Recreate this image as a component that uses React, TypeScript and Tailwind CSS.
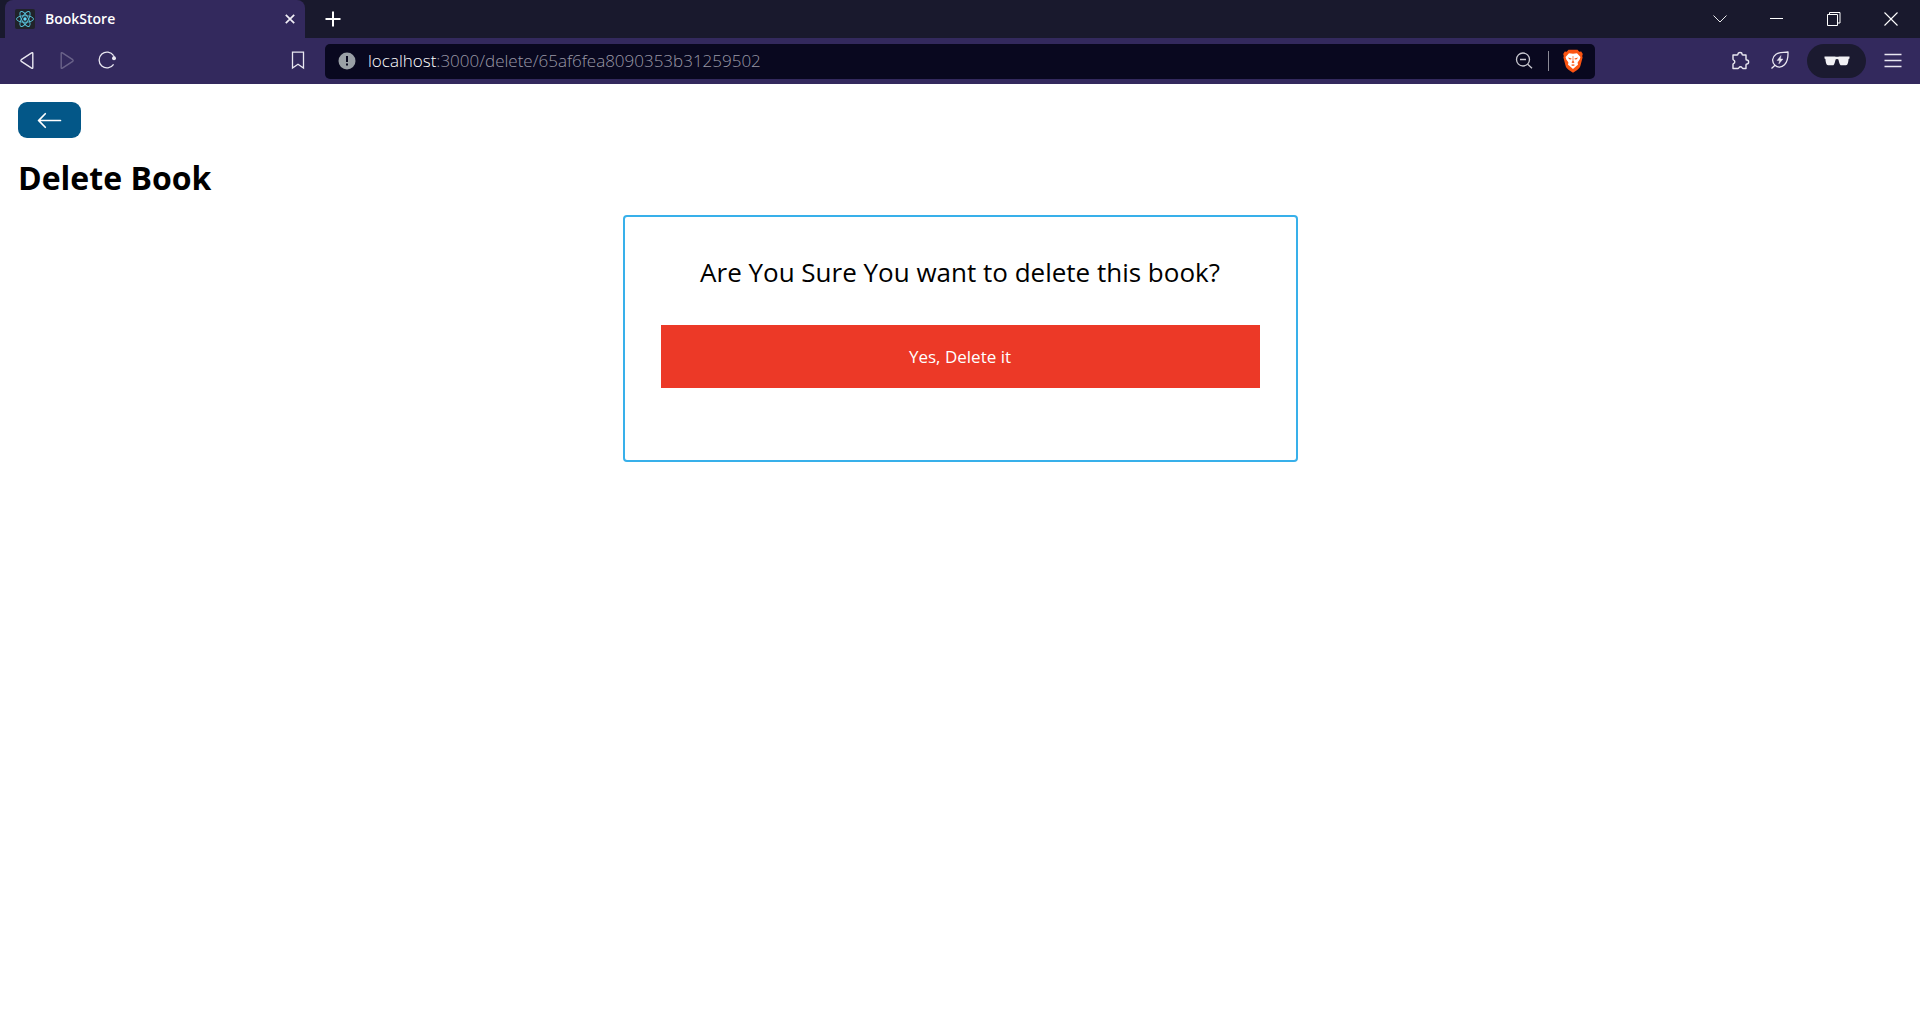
import { useState } from "react";
import { BsArrowLeft } from "react-icons/bs";

function ReactLogo() {
  return (
    <svg viewBox="0 0 20 20" className="size-5" aria-hidden="true">
      <rect width="20" height="20" rx="2" fill="#20232a" />
      <g fill="none" stroke="#58c4dc" strokeWidth="0.9">
        <ellipse cx="10" cy="10" rx="8.5" ry="3.3" />
        <ellipse cx="10" cy="10" rx="8.5" ry="3.3" transform="rotate(60 10 10)" />
        <ellipse cx="10" cy="10" rx="8.5" ry="3.3" transform="rotate(120 10 10)" />
      </g>
      <circle cx="10" cy="10" r="1.7" fill="#61dafb" />
    </svg>
  );
}

function BraveLogo() {
  return (
    <svg viewBox="0 0 20 24" className="h-6 w-5" aria-hidden="true">
      <path d="M5.500 0.800h9L16.300 2.800l1.900-.2 1.600 2.500-.6 2 .4 1.300-2.100 8.200c-.5 2-1.700 3.300-3.300 4.400L10 23.700l-4.200-2.700c-1.600-1.100-2.800-2.400-3.300-4.400L.4 8.400.8 7.100l-.6-2 1.600-2.500 1.900.2z" fill="#fb5412" />
      <path d="M6 4.200l4 .6 4-.6 3.400 3.700-.6 2.300-2.200 3.400.4 2.200-1.600 1.300L10 20l-3.400-2.900-1.600-1.300.4-2.200-2.200-3.400-.6-2.300z" fill="#fff" />
      <path d="M5 8.600l3.600.9-.5 1-1.900-.3zM15 8.600l-3.600.9.5 1 1.900-.3zM9.700 7h.6l.1 5 1.100 1.200L10 14.200l-1.500-1 1.100-1.200zM7.900 16L10 15.300l2.100.7L10 17z" fill="#fb5412" />
    </svg>
  );
}

function TabStrip() {
  return (
    <div className="flex h-[38px] bg-[#19192d] pl-[5px] text-white">
      <div className="flex w-[300px] items-center rounded-t-lg bg-[#33295d] pr-[7px] pl-[10px]">
        <ReactLogo />
        <span className="ml-[10px] flex-1 text-[14px] leading-5 font-semibold">BookStore</span>
        <button aria-label="Close tab" className="grid size-4 place-items-center">
          <svg viewBox="0 0 10 10" className="size-[10px]" stroke="#f0eef6" strokeWidth="1.7">
            <path d="M0.8 0.8l8.4 8.4M9.2 0.8L0.8 9.2" />
          </svg>
        </button>
      </div>
      <button aria-label="New tab" className="ml-5 grid w-4 place-items-center">
        <svg viewBox="0 0 16 16" className="size-4" stroke="white" strokeWidth="2">
          <path d="M8 0.5v15M0.5 8h15" />
        </svg>
      </button>
      <div className="ml-auto flex pr-px">
        <button aria-label="Search tabs" className="grid w-[57px] place-items-center">
          <svg viewBox="0 0 14 14" className="size-[14px]" fill="none" stroke="#e8e8ec">
            <path d="M0.5 3.500L7 10 13.5 3.500" />
          </svg>
        </button>
        <button aria-label="Minimize" className="grid w-[57px] place-items-center">
          <svg viewBox="0 0 14 14" className="size-[14px]" stroke="white">
            <path d="M0 6.5h13" />
          </svg>
        </button>
        <button aria-label="Restore" className="grid w-[57px] place-items-center">
          <svg viewBox="0 0 14 14" className="size-[14px]" fill="none" stroke="white">
            <path d="M0.5 2.5h10v11h-10zM2.5 2.5v-2h10.500v10.500h-2.500" />
          </svg>
        </button>
        <button aria-label="Close window" className="grid w-[57px] place-items-center">
          <svg viewBox="0 0 14 14" className="size-[14px]" stroke="white" strokeWidth="1.1">
            <path d="M0.5 0.5l13 13M13.5 0.5l-13 13" />
          </svg>
        </button>
      </div>
    </div>
  );
}

function Toolbar() {
  const [url, setUrl] = useState("localhost:3000/delete/65af6fea8090353b31259502");
  const colon = url.indexOf(":");
  const host = colon < 0 ? url : url.slice(0, colon);
  return (
    <div className="flex h-[46px] items-center bg-[#33295d] text-[#e9e7f1]">
      <button aria-label="Back" className="ml-[17px] size-5">
        <svg viewBox="0 0 20 20" className="size-5" fill="none" stroke="currentColor" strokeWidth="1.4" strokeLinejoin="round">
          <path d="M15.800 3v13.500q0 1.300-1.200 0.600L4.300 10.300q-0.900-0.800 0-1.600L14.600 1.900q1.200-0.700 1.200 0.600z" />
        </svg>
      </button>
      <button aria-label="Forward" disabled className="ml-5 size-5 text-[#6a6289]">
        <svg viewBox="0 0 20 20" className="size-5" fill="none" stroke="currentColor" strokeWidth="1.4" strokeLinejoin="round">
          <path d="M4.200 3v13.500q0 1.300 1.200 0.600L15.700 10.300q0.900-0.800 0-1.600L5.400 1.900q-1.200-0.700-1.200 0.600z" />
        </svg>
      </button>
      <button aria-label="Reload" className="ml-5 size-5">
        <svg viewBox="0 0 20 20" className="size-5" fill="none" stroke="currentColor" strokeWidth="1.300">
          <path d="M16.600 4.700A7.900 7.900 0 1 0 16.600 13.400" />
          <circle cx="17" cy="7.300" r="2" fill="currentColor" stroke="none" />
          <path d="M16.600 4.700l0.500 2" />
        </svg>
      </button>
      <button aria-label="Bookmark" className="ml-[171px] size-5">
        <svg viewBox="0 0 20 20" className="size-5" fill="none" stroke="currentColor" strokeWidth="1.300">
          <path d="M4.500 1.200h11v15.800L10 13.300 4.500 17z" />
        </svg>
      </button>
      <div className="ml-[17px] flex h-[35px] w-[1270px] shrink items-center rounded-[5px] bg-[#09081f] pr-3 pl-[13px]">
        <svg viewBox="0 0 18 18" className="size-[18px]" aria-hidden="true">
          <circle cx="9" cy="9" r="8.500" fill="#9aa0a6" />
          <path d="M8 4h2v6H8zM8 11.500h2v2H8z" fill="#09081f" />
        </svg>
        <div className="relative ml-3 flex-1 text-[17px] leading-6 font-light">
          <div aria-hidden="true" className="pointer-events-none whitespace-pre text-[#9a98a6]">
            <span className="text-white">{host}</span>
            {url.slice(host.length)}
          </div>
          <input
            aria-label="Address"
            value={url}
            onChange={(e) => setUrl(e.target.value)}
            className="absolute inset-0 w-full bg-transparent text-transparent caret-white outline-none"
          />
        </div>
        <button aria-label="Zoom out" className="size-5 text-[#c9c8d0]">
          <svg viewBox="0 0 20 20" className="size-5" fill="none" stroke="currentColor" strokeWidth="1.300">
            <circle cx="9" cy="8.500" r="6.500" />
            <path d="M13.700 13.200l4.300 4M6 8.500h6" />
          </svg>
        </button>
        <div className="ml-[14px] h-5 w-px bg-[#8b8a96]" />
        <button aria-label="Brave Shields" className="ml-[14px]">
          <BraveLogo />
        </button>
      </div>
      <div className="ml-auto flex items-center">
        <button aria-label="Extensions" className="size-5">
          <svg viewBox="0 0 20 20" className="size-5" fill="none" stroke="currentColor" strokeWidth="1.400" strokeLinejoin="round">
            <path d="M3 4h4.200c.7 0 .8-.4.800-.9C8 2 9 1.500 10 1.500s2 .6 2 1.600c0 .5.200.9.900.9H16v4.200c0 .6.300.8.900.8 1 0 1.700.9 1.700 2s-.7 2-1.700 2c-.6 0-.9.300-.9.800V17.500h-3.200c-.5 0-.6-.5-.8-.9-.7-1.200-2.300-1.200-3 0-.2.400-.3.900-.9.900H3v-4.200c0-.5.400-.7.800-.9 1.300-.6 1.300-2.700 0-3.300-.4-.2-.8-.3-.8-.9z" />
          </svg>
        </button>
        <button aria-label="Memory saver" className="ml-5 size-5">
          <svg viewBox="0 0 20 20" className="size-5" fill="none" stroke="currentColor" strokeWidth="1.300" strokeLinejoin="round">
            <path d="M1.500 17.500L5 14.300C1.500 11 2 6 6 3.200 9.500 0.800 14 1.800 18 1c.2 5.200-.3 9.500-3.500 12.700-3 3-7 3-9.500.6" />
            <path d="M11 4.500l-4 5h2.500L8.800 13l4.200-5h-2.500z" fill="currentColor" strokeWidth="0.400" />
          </svg>
        </button>
        <button aria-label="Private window" className="ml-[17px] grid h-[34px] w-[59px] place-items-center rounded-full bg-[#1b1a30]">
          <svg viewBox="0 0 26 10" className="h-[10px] w-[26px]" fill="#f2f1f5">
            <path d="M0.500 0.500h10.300c1.500.4 2.900.4 4.400 0h10.300v2l-.9.500c-.2 2.200-.6 4.400-1.300 5.500-.3.600-.8.800-1.500.8h-4.300c-.7 0-1.200-.3-1.500-.9-.7-1.300-1.200-3.200-1.600-5-.3-.7-2.500-.7-2.800 0-.4 1.800-.9 3.700-1.600 5-.3.600-.8.900-1.500.9H4.200c-.7 0-1.200-.2-1.500-.8C2 7.400 1.600 5.200 1.400 3L.5 2.500z" />
          </svg>
        </button>
        <button aria-label="Menu" className="mr-[18px] ml-[18px] size-[18px]">
          <svg viewBox="0 0 18 18" className="size-[18px]" stroke="currentColor" strokeWidth="1.400">
            <path d="M0.500 2.500h17M0.500 8.500h17M0.500 14.500h17" />
          </svg>
        </button>
      </div>
    </div>
  );
}

export default function App() {
  return (
    <div className="min-h-screen bg-white font-['Open_Sans',sans-serif] text-black">
      <header>
        <TabStrip />
        <Toolbar />
      </header>
      <main className="p-[18px]">
        <a href="#home" aria-label="Back to home" className="flex h-9 w-[63px] items-center justify-center rounded-[9px] bg-[#035788] text-white">
          <BsArrowLeft className="size-[27px]" />
        </a>
        <h1 className="mt-[18px] mb-4 text-[32px] leading-[43px] font-bold">Delete Book</h1>
        <div className="mx-auto flex w-full max-w-[675px] flex-col items-center rounded-[4px] border-2 border-[#38b0ea] px-9 pt-9 pb-[72px]">
          <h3 className="text-[26px] leading-[38px]">Are You Sure You want to delete this book?</h3>
          <button className="mt-[34px] w-full bg-[#ec3927] py-[18px] text-[17px] leading-[27px] text-white">Yes, Delete it</button>
        </div>
      </main>
    </div>
  );
}
